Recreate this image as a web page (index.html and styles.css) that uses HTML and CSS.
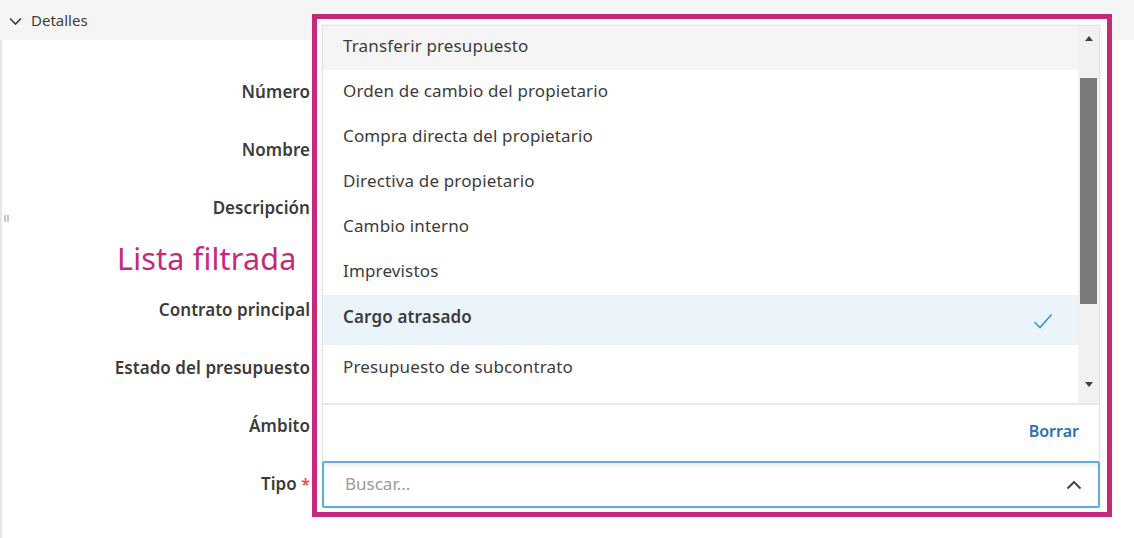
FILE: index.html
```html
<!DOCTYPE html>
<html lang="es">
<head>
<meta charset="utf-8">
<title>Detalles</title>
<link rel="stylesheet" href="styles.css">
</head>
<body>
<div class="page">
  <div class="section-head">
    <svg class="chev" width="13" height="8" viewBox="0 0 13 8"><path d="M1 1.5 L6.5 7 L12 1.5" fill="none" stroke="#3c3c3c" stroke-width="1.7"/></svg>
    <span>Detalles</span>
  </div>
  <div class="section-body">
    <span class="grip"></span>
    <div class="form">
      <div class="row"><label>Número</label></div>
      <div class="row"><label>Nombre</label></div>
      <div class="row tall"><label>Descripción</label></div>
      <div class="row"><label>Contrato principal</label></div>
      <div class="row"><label>Estado del presupuesto</label></div>
      <div class="row"><label>Ámbito</label></div>
      <div class="row"><label>Tipo <span class="req">*</span></label></div>
    </div>
  </div>

  <div class="annot">Lista filtrada</div>

  <div class="highlight">
    <div class="combo">
      <div class="menu">
        <div class="list">
          <div class="items">
            <div class="item hover">Transferir presupuesto</div>
            <div class="item">Orden de cambio del propietario</div>
            <div class="item">Compra directa del propietario</div>
            <div class="item">Directiva de propietario</div>
            <div class="item">Cambio interno</div>
            <div class="item">Imprevistos</div>
            <div class="item selected"><span>Cargo atrasado</span>
              <svg width="20" height="16" viewBox="0 0 20 16"><path d="M1.5 9 L7 14.5 L18.5 1.5" fill="none" stroke="#2a9bd8" stroke-width="1.6"/></svg>
            </div>
            <div class="item">Presupuesto de subcontrato</div>
          </div>
          <div class="scrollbar">
            <span class="arrow up"></span>
            <span class="thumb"></span>
            <span class="arrow down"></span>
          </div>
        </div>
        <div class="menu-foot"><span class="clear">Borrar</span></div>
      </div>
      <div class="input">
        <span class="placeholder">Buscar...</span>
        <svg width="16" height="10" viewBox="0 0 16 10"><path d="M1.5 8.5 L8 2 L14.5 8.5" fill="none" stroke="#3c3c3c" stroke-width="1.8"/></svg>
      </div>
    </div>
  </div>
</div>
</body>
</html>
```
FILE: styles.css
```css
* { box-sizing: border-box; }
html, body { margin: 0; padding: 0; background: #fff; }
body {
  font-family: "Noto Sans", "Open Sans", sans-serif;
  color: #3c3c3c;
  width: 1134px;
  height: 538px;
  overflow: hidden;
}
.page { position: relative; width: 1134px; height: 538px; }

.section-head {
  height: 40px;
  background: #f5f5f5;
  display: flex;
  align-items: center;
  gap: 9px;
  padding: 0 0 0 9px;
  font-size: 15px;
  color: #3c3c3c;
}
.chev { position: relative; top: 1px; }

.section-body {
  position: relative;
  border-left: 2px solid #e3e6ea;
  height: 498px;
  padding-top: 24px;
}
.grip {
  position: absolute;
  left: 2px;
  top: 175px;
  width: 5px;
  height: 7px;
  border-left: 2px solid #c8c8c8;
  border-right: 2px solid #c8c8c8;
}

.form { display: flex; flex-direction: column; }
.row {
  height: 58px;
  display: flex;
  align-items: flex-start;
}
.row.tall { height: 102px; }
.row label {
  width: 308px;
  text-align: right;
  line-height: 56px;
  font-weight: 600;
  font-size: 17px;
  color: #3c3c3c;
  letter-spacing: 0.05px;
}
.req { color: #e8484b; font-size: 16px; }

.annot {
  position: absolute;
  left: 117px;
  top: 237px;
  font-size: 30.5px;
  color: #c6287a;
  font-weight: 400;
  letter-spacing: 0.2px;
}

.highlight {
  position: absolute;
  left: 312px;
  top: 14px;
  width: 800px;
  height: 503px;
  border: 5px solid #c6287a;
  background: #fff;
  padding: 6px 0 0 5px;
}

.combo { width: 778px; display: flex; flex-direction: column; }
.menu {
  background: #fff;
  border: 1px solid #e2e4e7;
  border-bottom: none;
  box-shadow: 0 0 4px rgba(0,0,0,0.08);
}
.list {
  height: 377px;
  display: flex;
  overflow: hidden;
}
.items { flex: 1; }
.item {
  height: 45px;
  display: flex;
  align-items: center;
  justify-content: space-between;
  padding: 0 45px 5px 20px;
  font-size: 17px;
  letter-spacing: 0.15px;
  color: #3c3c3c;
}
.item.hover { background: #f5f5f5; height: 44px; }
.item.selected { background: #ebf4fb; height: 50px; font-weight: 600; padding-bottom: 7px; }
.item.selected svg { margin-top: 8px; margin-right: -20px; }
.item.selected + .item { padding-bottom: 3px; }

.scrollbar {
  width: 21px;
  background: #f1f1f1;
  display: flex;
  flex-direction: column;
  align-items: center;
  padding-top: 10px;
}
.arrow { width: 0; height: 0; border-left: 4.5px solid transparent; border-right: 4.5px solid transparent; }
.arrow.up { border-bottom: 5px solid #404040; }
.arrow.down { border-top: 5px solid #404040; margin-top: 78px; }
.thumb { width: 17px; height: 226px; background: #7a7a7a; margin-top: 37px; }

.menu-foot {
  height: 58px;
  border-top: 2px solid #e8e8e8;
  display: flex;
  align-items: center;
  justify-content: flex-end;
  padding: 0 20px 4px 0;
}
.clear { color: #2a70b6; font-size: 16px; font-weight: 600; }

.input {
  height: 47px;
  border: 2px solid #5aaed8;
  border-radius: 2px;
  box-shadow: inset 0 4px 6px -3px rgba(0,0,0,0.12);
  display: flex;
  align-items: center;
  justify-content: space-between;
  padding: 0 16px 2px 21px;
  background: #fff;
}
.input svg { margin-top: 2px; }
.placeholder { color: #9b9b9b; font-size: 17px; }
```
